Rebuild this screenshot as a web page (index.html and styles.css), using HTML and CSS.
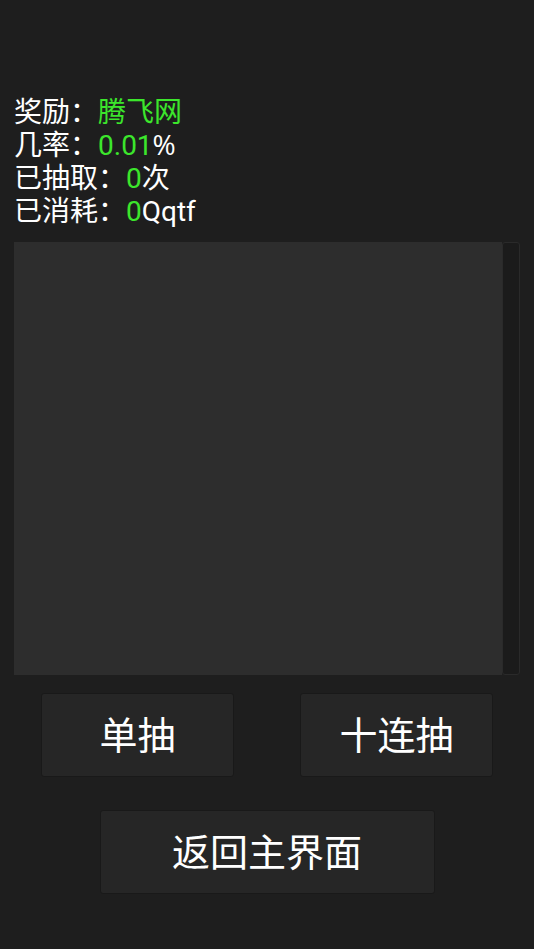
FILE: index.html
```html
<!DOCTYPE html>
<html lang="zh">
<head>
<meta charset="utf-8">
<link rel="stylesheet" href="styles.css">
</head>
<body>
<div class="page">
  <div class="info">
    <div class="line">奖励：<span class="hl">腾飞网</span></div>
    <div class="line">几率：<span class="hl">0.01</span><span class="pct">%</span></div>
    <div class="line">已抽取：<span class="hl">0</span>次</div>
    <div class="line">已消耗：<span class="hl">0</span>Qqtf</div>
  </div>
  <div class="panel">
    <div class="list"></div>
    <div class="scrollbar"></div>
  </div>
  <div class="row">
    <div class="btn small">单抽</div>
    <div class="btn small">十连抽</div>
  </div>
  <div class="row center">
    <div class="btn wide">返回主界面</div>
  </div>
</div>
</body>
</html>
```
FILE: styles.css
```css
html, body {
  margin: 0;
  padding: 0;
  background: #1e1e1e;
}
.page {
  width: 534px;
  height: 949px;
  font-family: Roboto, "Noto Sans CJK SC", sans-serif;
  color: #ffffff;
  box-sizing: border-box;
  padding-top: 96px;
}
.info {
  padding-left: 14px;
  font-size: 28px;
  line-height: 33px;
}
.line {
  height: 33px;
}
.hl {
  color: #3ce62c;
}
.pct {
  font-family: "Open Sans", Roboto, sans-serif;
  line-height: 1;
}
.panel {
  margin: 14px 14px 0 14px;
  height: 433px;
  display: flex;
}
.list {
  flex: 1;
  background: #2d2d2d;
}
.scrollbar {
  width: 16px;
  background: #1b1b1b;
  border: 1px solid #2a2a2a;
  border-radius: 3px;
}
.row {
  display: flex;
  justify-content: space-between;
  padding: 0 41px 0 41px;
  margin-top: 18px;
}
.row.center {
  justify-content: center;
  margin-top: 33px;
  padding: 0;
}
.btn {
  height: 84px;
  box-sizing: border-box;
  background: #262626;
  border: 1px solid #191919;
  border-radius: 3px;
  display: flex;
  align-items: center;
  justify-content: center;
  font-size: 38px;
  color: #ffffff;
  padding-bottom: 6px;
}
.btn.small {
  width: 193px;
}
.btn.wide {
  width: 335px;
}
```
